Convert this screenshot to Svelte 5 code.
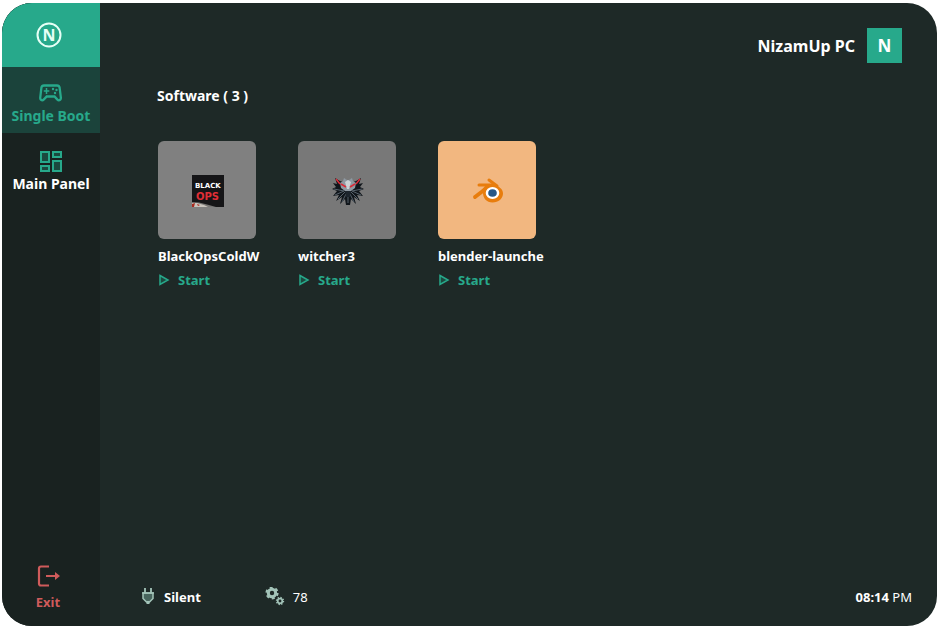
<script lang="ts">
	type App = { id: string; label: string; icon: string };

	const apps: App[] = [
		{ id: 'blackops', label: 'BlackOpsColdW', icon: 'blackops' },
		{ id: 'witcher', label: 'witcher3', icon: 'witcher' },
		{ id: 'blender', label: 'blender-launche', icon: 'blender' }
	];

	let page = $state('boot');
</script>

<div class="window">
	<nav class="sidebar">
		<div class="brand">
			<svg width="26" height="26" viewBox="0 0 26 26" aria-hidden="true">
				<circle cx="13" cy="13" r="11.5" fill="none" stroke="#e6fff6" stroke-width="2" />
				<text x="13" y="19" text-anchor="middle" class="brand-letter">N</text>
			</svg>
		</div>

		<button class="nav-item" class:active={page === 'boot'} onclick={() => (page = 'boot')}>
			<svg width="24" height="24" viewBox="0 0 24 24" fill="none" stroke="#27a98b" aria-hidden="true">
				<path
					d="M5 4.5h13c1.5 0 2.300.7 2.600 2.100l1.200 9.500c.3 1.900-.5 3.200-1.800 3.200-.8 0-1.200-.3-1.800-.9L15.500 15.500H7.700L4.900 18.400c-.6.6-1 .9-1.800.9-1.300 0-2.100-1.300-1.800-3.200L2.400 6.600C2.700 5.200 3.500 4.500 5 4.500z"
					stroke-width="2.300"
				/>
				<path d="M7.500 7v6M4.800 10h5.500" stroke-width="1.500" />
				<g fill="#27a98b" stroke="none">
					<circle cx="14" cy="8" r="1.200" />
					<circle cx="17.500" cy="9" r="1.200" />
					<circle cx="16" cy="12" r="1.200" />
				</g>
			</svg>
			<span>Single Boot</span>
		</button>

		<button class="nav-item" class:active={page === 'panel'} onclick={() => (page = 'panel')}>
			<svg width="24" height="24" viewBox="0 0 24 24" aria-hidden="true">
				<g fill="#1b493f" stroke="#27a98b" stroke-width="2">
					<rect x="2" y="3" width="8" height="10" />
					<rect x="14" y="3" width="8" height="5" />
					<rect x="2" y="17" width="8" height="5" />
					<rect x="14" y="12" width="8" height="10" />
				</g>
			</svg>
			<span>Main Panel</span>
		</button>

		<button class="nav-item exit">
			<svg width="24" height="24" viewBox="0 0 24 24" fill="none" stroke="#cf5b5b" aria-hidden="true">
				<path d="M13 2.500H5Q3 2.500 3 4.500v15q0 2 2 2H13" stroke-width="2.200" />
				<path d="M10 12h11" stroke-width="2" />
				<path d="M19 8L24 12l-5 4z" fill="#cf5b5b" stroke="none" />
			</svg>
			<span>Exit</span>
		</button>
	</nav>

	<div class="content">
		<header>
			<span>NizamUp PC</span>
			<span class="avatar">N</span>
		</header>

		<main>
			<h1>Software ( {apps.length} )</h1>

			<ul class="apps">
				{#each apps as app (app.id)}
					<li>
						<div class="tile {app.icon}">
							{#if app.icon === 'blackops'}
								<svg width="32" height="32" viewBox="0 0 32 32" aria-hidden="true">
									<rect width="32" height="32" fill="#151517" />
									<path d="M0 27l7 .5 8 2 9 2.500H0z" fill="#777674" />
									<path d="M0 28l5 0 7 2 4 2H0z" fill="#c9c4bd" />
									<path d="M0 29l3-1-1 4H0zM5 29l3 1-2 1z" fill="#a82a20" />
									<text x="3" y="13" class="bo-top">BLACK</text>
									<text x="4" y="25" class="bo-bottom">OPS</text>
								</svg>
							{:else if app.icon === 'witcher'}
								<svg width="32" height="32" viewBox="0 0 32 32" aria-hidden="true">
									<path
										d="M3 3L8 6L11 7L13 4L15 6H17L19 4L21 7L24 6L29 3L27 9L31 8L28 12L32 14L27 16L31 21L25 20L28 26L22 22L24 29L19 24L18 30H14L13 24L8 29L10 22L4 26L7 20L1 21L5 16L0 14L4 12L1 8L5 9z"
										fill="#11161b"
									/>
									<path
										d="M2 14l10 2M30 14l-10 2M3 20l9-4M29 20l-9-4M6 24l7-7M26 24l-7-7M10 27l4-8M22 27l-4-8M16 21v7"
										stroke="#56616b"
										fill="none"
									/>
									<path
										d="M8 8l3-2 1-3 3 2h2l3-2 1 3 3 2-1 5-4 3-2 2h-2l-2-2-4-3z"
										fill="#8f99a2"
									/>
									<path d="M13 7l3-2 3 2-2 7h-2z" fill="#ccd2d6" />
									<path d="M13 16h6l-1 6h-4z" fill="#1d252d" />
									<path
										d="M4 4l4 5M28 4l-4 5M9 9l5 3M23 9l-5 3"
										stroke="#da2b38"
										stroke-width="1.500"
										fill="none"
									/>
								</svg>
							{:else}
								<svg width="32" height="32" viewBox="0 0 32 32" aria-hidden="true">
									<g stroke="#e87d0d" fill="none" stroke-linecap="round">
										<path d="M3 22L16 12" stroke-width="3.800" />
										<path d="M7 10h13" stroke-width="3" />
										<path d="M17 5l8 6" stroke-width="3" />
									</g>
									<path
										d="M14 10h9c5 2 8 4.500 8 8.500 0 5-4.500 9-10.500 9S11 23 11 18l-3-1z"
										fill="#e87d0d"
									/>
									<ellipse cx="20.500" cy="18" rx="6.800" ry="6" fill="#fff" />
									<ellipse cx="20.500" cy="18" rx="4.300" ry="3.800" fill="#265787" />
								</svg>
							{/if}
						</div>
						<span class="name">{app.label}</span>
						<button class="start">
							<svg width="12" height="12" viewBox="0 0 12 12" aria-hidden="true">
								<path d="M2 1.500L10 6 2 10.500z" fill="#1b493f" stroke="#27a98b" stroke-width="1.500" />
							</svg>
							Start
						</button>
					</li>
				{/each}
			</ul>
		</main>

		<footer>
			<button class="status power">
				<svg width="16" height="18" viewBox="0 0 16 18" aria-hidden="true">
					<path d="M5 0v5M11 0v5" stroke="#a3c4b9" stroke-width="1.800" />
					<path
						d="M3 5h10v5.500L9.500 14h-3L3 10.500z"
						fill="#48655d"
						stroke="#a3c4b9"
						stroke-width="1.500"
					/>
					<path d="M2 5h12" stroke="#a3c4b9" stroke-width="1.500" />
					<path d="M8 13v3" stroke="#a3c4b9" stroke-width="3" />
				</svg>
				<b>Silent</b>
			</button>
			<span class="status">
				<svg width="20" height="20" viewBox="0 0 20 20" fill="none" stroke="#a3c4b9" aria-hidden="true">
					<circle cx="7" cy="6" r="3.700" stroke-width="3" />
					<circle cx="7" cy="6" r="5.600" stroke-width="2" stroke-dasharray="2.930 2.930" />
					<circle cx="15" cy="14" r="2.300" stroke-width="1.700" />
					<circle cx="15" cy="14" r="3.500" stroke-width="1.400" stroke-dasharray="1.370 1.370" />
				</svg>
				<span>78</span>
			</span>
			<time datetime="20:14"><b>08:14</b> PM</time>
		</footer>
	</div>
</div>

<style>
	:global(body) {
		margin: 0;
		background: #fff;
	}

	.window {
		display: flex;
		box-sizing: border-box;
		min-height: calc(100vh - 6px);
		margin: 3px 3px 3px 2px;
		border-radius: 30px;
		overflow: hidden;
		background: #1e2927;
		color: #fff;
		font-family: 'Noto Sans', 'Open Sans', sans-serif;
		font-size: 13px;
		line-height: 18px;
	}

	button {
		padding: 0;
		border: 0;
		background: none;
		color: inherit;
		font: inherit;
		cursor: pointer;
	}

	svg {
		display: block;
		flex-shrink: 0;
	}

	/* sidebar */
	.sidebar {
		display: flex;
		flex-direction: column;
		flex: 0 0 98px;
		background: #192220;
	}

	.brand {
		display: flex;
		align-items: center;
		justify-content: center;
		height: 64px;
		padding-right: 4px;
		background: #27a98b;
	}

	.brand-letter {
		fill: #e6fff6;
		font-size: 16px;
		font-weight: 700;
	}

	.nav-item {
		display: flex;
		flex-direction: column;
		align-items: center;
		gap: 2px;
		padding: 14px 0 8px;
		font-size: 14px;
		font-weight: 700;
	}

	.nav-item + .nav-item {
		padding-top: 16px;
	}

	.nav-item.active {
		background: #1b433b;
		color: #27a98b;
	}

	.nav-item.exit {
		margin-top: auto;
		padding: 0 6px 15px 0;
		gap: 5px;
		color: #cf5b5b;
		font-size: 13px;
	}

	/* content */
	.content {
		display: flex;
		flex-direction: column;
		flex: 1;
		min-width: 0;
	}

	header {
		display: flex;
		align-items: center;
		justify-content: flex-end;
		gap: 12px;
		padding: 25px 35px 0 0;
		font-size: 16px;
		font-weight: 700;
	}

	.avatar {
		width: 35px;
		line-height: 35px;
		background: #27a98b;
		text-align: center;
		font-size: 17px;
	}

	main {
		flex: 1;
		padding: 24px 24px 24px 57px;
	}

	h1 {
		margin: 0;
		font-size: 14px;
		font-weight: 700;
		line-height: 18px;
	}

	.apps {
		display: grid;
		grid-template-columns: repeat(auto-fill, 98px);
		gap: 24px 42px;
		margin: 36px 0 0;
		padding: 0 0 0 1px;
		list-style: none;
	}

	.tile {
		display: flex;
		align-items: center;
		justify-content: center;
		box-sizing: border-box;
		height: 98px;
		padding: 2px 0 0 2px;
		border-radius: 6px;
		background: #787878;
	}

	.tile.blackops {
		background: #808080;
	}

	.tile.blender {
		background: #f2b780;
	}

	.bo-top,
	.bo-bottom {
		font-family: 'DejaVu Sans', sans-serif;
		font-weight: 700;
	}

	.bo-top {
		fill: #fff;
		font-size: 7px;
	}

	.bo-bottom {
		fill: #e02e36;
		font-size: 10px;
	}

	.name {
		display: block;
		margin-top: 8px;
		font-weight: 700;
		white-space: nowrap;
	}

	.start {
		display: flex;
		align-items: center;
		gap: 8px;
		margin-top: 6px;
		color: #27a98b;
		font-weight: 700;
	}

	footer {
		display: flex;
		align-items: center;
		padding: 0 25px 19px 40px;
	}

	.status {
		display: flex;
		align-items: center;
		gap: 8px;
	}

	.power {
		margin-right: 64px;
	}

	time {
		margin-left: auto;
	}
</style>
